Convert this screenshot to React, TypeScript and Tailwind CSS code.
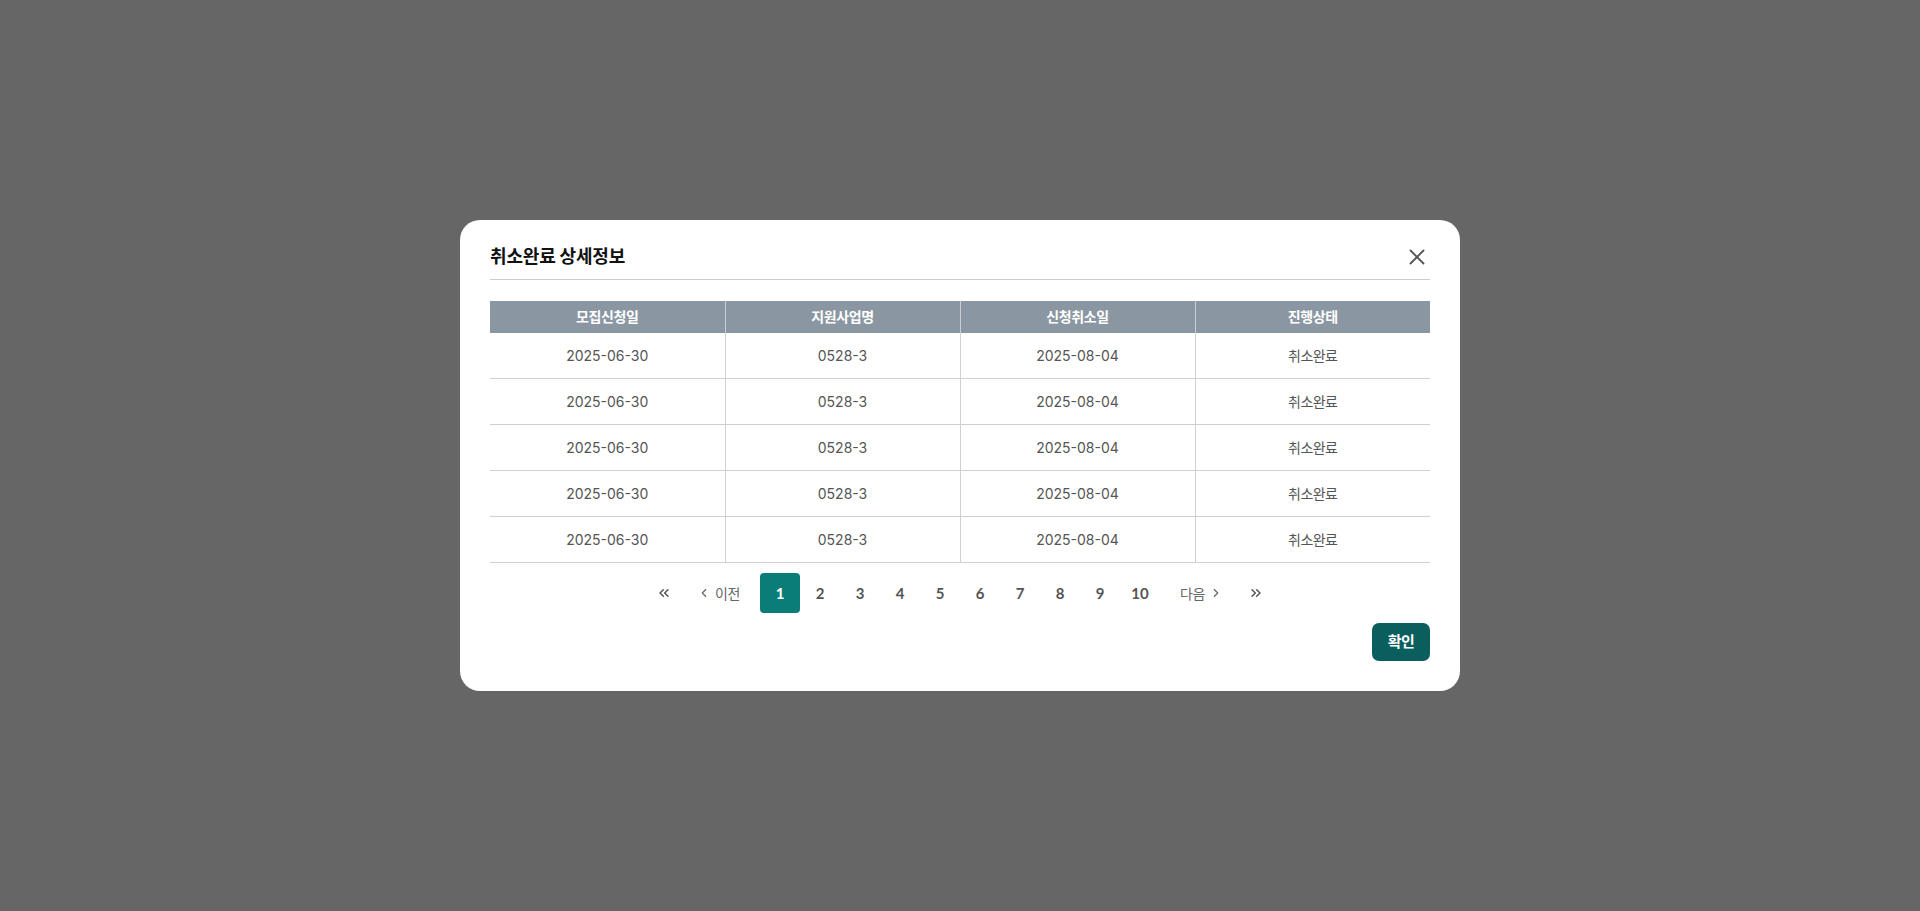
import { X, ChevronLeft, ChevronRight, ChevronsLeft, ChevronsRight } from 'lucide-react'

const rows = Array.from({ length: 5 }, () => ({
  applied: '2025-06-30',
  program: '0528-3',
  cancelled: '2025-08-04',
  status: '취소완료',
}))

const headers = ['모집신청일', '지원사업명', '신청취소일', '진행상태']

export default function App() {
  return (
    <div
      className="flex h-[911px] w-full items-center justify-center bg-[#666666]"
      style={{ fontFamily: "Inter, 'Noto Sans CJK KR', sans-serif" }}
    >
      <div className="w-[1000px] rounded-[20px] bg-white px-[30px] pb-[30px] pt-[24px]">
        <div className="flex h-[36px] items-start justify-between border-b border-[#cccccc] pt-[1px]">
          <h2 className="h-[24px] text-[18px] font-bold leading-[24px] tracking-[-0.01em] text-[#111111]">
            취소완료 상세정보
          </h2>
          <button className="flex h-[24px] items-center text-[#555555]" aria-label="닫기">
            <X size={26} strokeWidth={1.7} />
          </button>
        </div>

        <table className="mt-[21px] w-full table-fixed border-collapse">
          <thead>
            <tr className="h-[32px] bg-[#8a97a3]">
              {headers.map((h, i) => (
                <th
                  key={h}
                  className={`p-0 text-center text-[14px] font-bold tracking-[-0.03em] text-white ${i < 3 ? 'border-r border-[#c9ced3]' : ''}`}
                >
                  {h}
                </th>
              ))}
            </tr>
          </thead>
          <tbody>
            {rows.map((r, idx) => (
              <tr key={idx} className="h-[46px] border-b border-[#d0d0d0]">
                <td className="border-r border-[#d0d0d0] p-0 text-center text-[14px] text-[#555555]">{r.applied}</td>
                <td className="border-r border-[#d0d0d0] p-0 text-center text-[14px] text-[#555555]">{r.program}</td>
                <td className="border-r border-[#d0d0d0] p-0 text-center text-[14px] text-[#555555]">{r.cancelled}</td>
                <td className="p-0 text-center text-[14px] tracking-[-0.04em] text-[#555555]">{r.status}</td>
              </tr>
            ))}
          </tbody>
        </table>

        <div className="mt-[10px] flex h-[40px] items-center justify-center text-[#555555]">
          <button className="flex h-10 w-10 items-center justify-center text-[#555555]" aria-label="처음">
            <ChevronsLeft size={16} strokeWidth={2.2} />
          </button>
          <button className="ml-[13px] mr-[20px] flex h-10 items-center gap-[4px] text-[14px] text-[#666666]">
            <ChevronLeft size={14} strokeWidth={2} />
            <span className="tracking-[-0.03em]">이전</span>
          </button>
          {Array.from({ length: 10 }, (_, i) => i + 1).map(n => (
            <button
              key={n}
              className={`flex h-10 w-10 items-center justify-center rounded-[4px] text-[15px] font-bold ${n === 1 ? 'bg-[#0b7d79] text-white' : 'text-[#555555]'}`}
              style={{ fontFamily: 'Lato, sans-serif' }}
            >
              {n}
            </button>
          ))}
          <button className="ml-[20px] mr-[13px] flex h-10 items-center gap-[4px] text-[14px] text-[#666666]">
            <span className="tracking-[-0.03em]">다음</span>
            <ChevronRight size={14} strokeWidth={2} />
          </button>
          <button className="flex h-10 w-10 items-center justify-center text-[#555555]" aria-label="마지막">
            <ChevronsRight size={16} strokeWidth={2.2} />
          </button>
        </div>

        <div className="mt-[10px] flex justify-end">
          <button className="h-[38px] w-[58px] rounded-[7px] bg-[#0a5e5d] text-[15px] font-bold tracking-[-0.03em] text-white">
            확인
          </button>
        </div>
      </div>
    </div>
  )
}
